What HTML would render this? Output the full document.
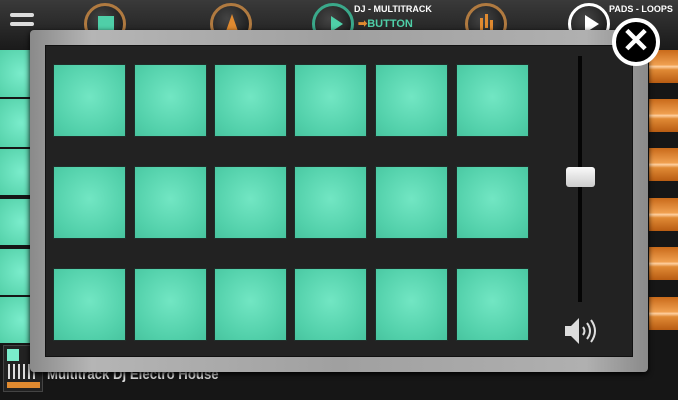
<!DOCTYPE html>
<html><head><style>
*{margin:0;padding:0;box-sizing:border-box}
body{width:678px;height:400px;overflow:hidden;background:#161616;position:relative;font-family:"Liberation Sans",sans-serif}
.a{position:absolute}
.pad{position:absolute;width:71px;height:71px;background:radial-gradient(circle at 50% 45%,#72e6c3,#52d0aa 70%,#48c49f);box-shadow:0 0 0 1px #1f2f2a}
.lt{position:absolute;left:0;width:30px;background:radial-gradient(circle at 70% 50%,#7aeccb,#53d0a8)}
.rt{position:absolute;left:649px;width:29px;height:33px;background:linear-gradient(#c96a1a,#f0a050 45%,#ffd0a0 50%,#e08a35 60%,#b85c12)}
.circ{position:absolute;width:42px;height:42px;border-radius:50%;border:3px solid #b07a40;background:radial-gradient(circle at 40% 35%,#444,#111)}
</style></head><body>
<div class="a" style="left:0;top:0;width:678px;height:50px;background:linear-gradient(#3a3a3a,#1a1a1a)"></div>
<div class="a" style="left:10px;top:13px;width:24px;height:4px;background:#ddd;border-radius:2px"></div>
<div class="a" style="left:10px;top:22px;width:24px;height:4px;background:#ddd;border-radius:2px"></div>
<div class="circ" style="left:84px;top:3px"><div class="a" style="left:11px;top:10px;width:16px;height:20px;background:#4fcfa8"></div></div>
<div class="circ" style="left:210px;top:3px"><div class="a" style="left:12px;top:8px;border-left:7px solid transparent;border-right:7px solid transparent;border-bottom:20px solid #e08a30"></div></div>
<div class="circ" style="left:312px;top:3px;border-color:#3aa88a"><div class="a" style="left:16px;top:10px;border-top:8px solid transparent;border-bottom:8px solid transparent;border-left:12px solid #4fcfa8"></div></div>
<div class="a" style="left:354px;top:4px;color:#fff;font-size:9px;font-weight:bold;white-space:nowrap">DJ - MULTITRACK</div>
<div class="a" style="left:358px;top:17px;color:#4fcfa8;font-size:11px;font-weight:bold;white-space:nowrap"><span style="color:#e08a30">➡</span>BUTTON</div>
<div class="circ" style="left:465px;top:3px"><div class="a" style="left:12px;top:12px;width:3px;height:14px;background:#e08a30;box-shadow:5px -4px 0 #e08a30,10px 2px 0 #e08a30"></div></div>
<div class="circ" style="left:568px;top:3px;border-color:#fff"><div class="a" style="left:14px;top:9px;border-top:9px solid transparent;border-bottom:9px solid transparent;border-left:14px solid #fff"></div></div>
<div class="a" style="left:609px;top:4px;color:#fff;font-size:9px;font-weight:bold;white-space:nowrap">PADS - LOOPS</div>
<div class="lt" style="top:50px;height:47px"></div><div class="lt" style="top:99px;height:48px"></div><div class="lt" style="top:149px;height:46px"></div><div class="lt" style="top:199px;height:46px"></div><div class="lt" style="top:249px;height:46px"></div><div class="lt" style="top:297px;height:46px"></div>
<div class="rt" style="top:50px"></div><div class="rt" style="top:99px"></div><div class="rt" style="top:148px"></div><div class="rt" style="top:198px"></div><div class="rt" style="top:247px"></div><div class="rt" style="top:297px"></div>
<div class="a" style="left:3px;top:345px;width:40px;height:47px;background:#222;border:1px solid #444"><div class="a" style="left:3px;top:3px;width:12px;height:12px;background:#7aeccb"></div><div class="a" style="left:3px;top:36px;width:33px;height:6px;background:#e08a30"></div><div class="a" style="left:4px;top:18px;width:30px;height:15px;background:repeating-linear-gradient(90deg,#ddd 0 2px,transparent 2px 5px)"></div></div>
<div class="a" style="left:47px;top:366px;color:#ddd;font-size:15px;font-weight:bold;white-space:nowrap;transform:scaleX(0.88);transform-origin:left">Multitrack Dj Electro House</div>
<div class="a" style="left:30px;top:30px;width:618px;height:342px;background:linear-gradient(90deg,#8a8a8a,#b5b5b5 10%,#a0a0a0 50%,#b0b0b0 90%,#8a8a8a);border-radius:4px;box-shadow:0 2px 6px #000"></div>
<div class="a" style="left:45px;top:45px;width:588px;height:312px;background:#222;border:1px solid #111"></div>
<div class="pad" style="left:54px;top:65px"></div><div class="pad" style="left:135px;top:65px"></div><div class="pad" style="left:215px;top:65px"></div><div class="pad" style="left:295px;top:65px"></div><div class="pad" style="left:376px;top:65px"></div><div class="pad" style="left:457px;top:65px"></div>
<div class="pad" style="left:54px;top:167px"></div><div class="pad" style="left:135px;top:167px"></div><div class="pad" style="left:215px;top:167px"></div><div class="pad" style="left:295px;top:167px"></div><div class="pad" style="left:376px;top:167px"></div><div class="pad" style="left:457px;top:167px"></div>
<div class="pad" style="left:54px;top:269px"></div><div class="pad" style="left:135px;top:269px"></div><div class="pad" style="left:215px;top:269px"></div><div class="pad" style="left:295px;top:269px"></div><div class="pad" style="left:376px;top:269px"></div><div class="pad" style="left:457px;top:269px"></div>
<div class="a" style="left:578px;top:56px;width:4px;height:246px;background:#050505"></div>
<div class="a" style="left:566px;top:167px;width:29px;height:20px;border-radius:3px;background:linear-gradient(#fafafa,#ccc)"></div>
<svg class="a" style="left:562px;top:313px" width="36" height="36" viewBox="0 0 36 36"><path d="M3 13h6l8-8v26l-8-8H3z" fill="#ddd"/><path d="M21 14q3 4 0 8M25 10q6 8 0 16M29 7q8 11 0 22" stroke="#ddd" stroke-width="2" fill="none"/></svg>
<div class="a" style="left:612px;top:18px;width:48px;height:48px;border-radius:50%;background:#000;border:4px solid #fff;color:#fff;font-size:34px;font-weight:bold;line-height:38px;text-align:center">✕</div>
</body></html>
